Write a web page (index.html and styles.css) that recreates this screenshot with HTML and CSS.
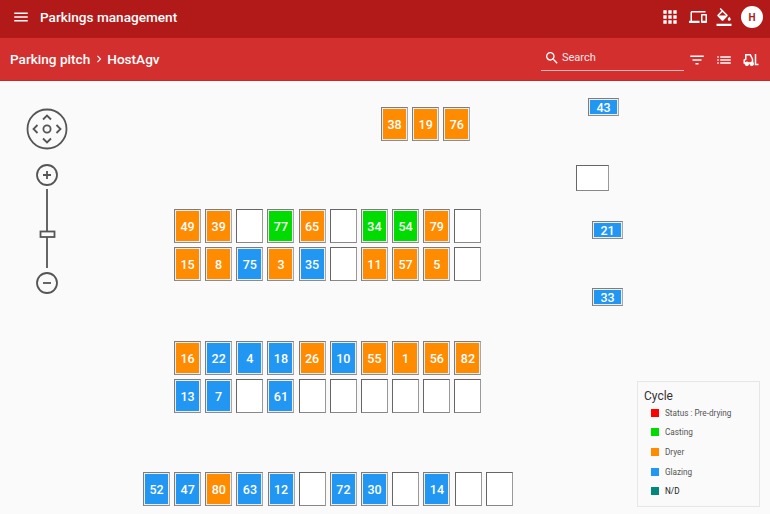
FILE: index.html
```html
<!DOCTYPE html>
<html lang="en">
<head>
<meta charset="utf-8">
<title>Parkings management</title>
<link rel="stylesheet" href="styles.css">
</head>
<body>
<header class="topbar">
  <svg class="menu-icon" width="18" height="18" viewBox="0 0 24 24"><path d="M3 18h18v-2H3zM3 13h18v-2H3zM3 6v2h18V6z"/></svg>
  <span class="app-title">Parkings management</span>
  <div class="top-actions">
    <svg width="24" height="24" viewBox="0 0 24 24"><path d="M4 8h4V4H4zm6 12h4v-4h-4zm-6 0h4v-4H4zm0-6h4v-4H4zm6 0h4v-4h-4zm6-10v4h4V4zm-6 4h4V4h-4zm6 6h4v-4h-4zm0 6h4v-4h-4z"/></svg>
    <svg width="24" height="24" viewBox="0 0 24 24"><path d="M4 6h18V4H4c-1.100 0-2 .9-2 2v11H0v3h14v-3H4V6zm19 2h-6c-.55 0-1 .45-1 1v10c0 .55.45 1 1 1h6c.55 0 1-.45 1-1V9c0-.55-.45-1-1-1zm-1 9h-4v-7h4v7z"/></svg>
    <svg width="24" height="24" viewBox="0 0 24 24"><path d="M16.56 8.94 7.62 0 6.21 1.41l2.38 2.38-5.150 5.150c-.59.59-.59 1.540 0 2.120l5.500 5.500c.29.29.68.44 1.060.44s.77-.15 1.060-.44l5.500-5.500c.59-.58.59-1.530 0-2.120zM5.210 10 10 5.210 14.790 10H5.210zM19 11.500s-2 2.170-2 3.500c0 1.100.9 2 2 2s2-.9 2-2c0-1.330-2-3.500-2-3.500zM2 21h20v3H2z"/></svg>
    <span class="avatar">H</span>
  </div>
</header>
<div class="subbar">
  <div class="crumbs">
    <span>Parking pitch</span>
    <svg width="14" height="14" viewBox="0 0 24 24"><path d="M8.6 16.6 13.2 12 8.6 7.4 10 6l6 6-6 6z"/></svg>
    <span>HostAgv</span>
  </div>
  <div class="search">
    <svg width="16" height="16" viewBox="0 0 24 24"><path d="M15.500 14h-.79l-.28-.27A6.470 6.470 0 0 0 16 9.500 6.500 6.500 0 1 0 9.500 16c1.610 0 3.090-.59 4.230-1.570l.27.28v.79l5 4.990L20.490 19l-4.990-5zm-6 0C7.010 14 5 11.990 5 9.500S7.010 5 9.500 5 14 7.010 14 9.500 11.990 14 9.500 14z"/></svg>
    <span>Search</span>
  </div>
  <div class="sub-actions">
    <svg width="18" height="18" viewBox="0 0 24 24"><path d="M10 18h4v-2h-4zM3 6v2h18V6zm3 7h12v-2H6z"/></svg>
    <svg width="18" height="18" viewBox="0 0 24 24"><path d="M3 13h2v-2H3zm0 4h2v-2H3zm0-8h2V7H3zm4 4h14v-2H7zm0 4h14v-2H7zM7 7v2h14V7z"/></svg>
    <svg width="18" height="18" viewBox="0 0 24 24"><path d="M3 16v-4l2-1V5h6l3 6v5z" class="hollow"/><circle cx="6.500" cy="17" r="2.500" class="wheel"/><circle cx="13" cy="17" r="2.500" class="wheel"/><path d="M18 4v14h4" class="hollow"/></svg>
  </div>
</div>
<main class="canvas">
  <div class="controls">
    <svg width="42" height="42" viewBox="0 0 42 42"><circle cx="21" cy="21" r="19.500"/><circle cx="21" cy="21" r="3.600"/><path d="M17 11.500l4-4 4 4M17 30.500l4 4 4-4M11.500 17l-4 4 4 4M30.500 17l4 4-4 4"/></svg>
    <svg width="24" height="108" viewBox="0 0 24 108" class="zoom"><circle cx="12" cy="12" r="10"/><path d="M8 12h8M12 8v8M12 26v79"/><rect x="5.500" y="68.500" width="14" height="5.500" class="thumb"/></svg>
    <svg width="24" height="24" viewBox="0 0 24 24"><circle cx="12" cy="12" r="10"/><path d="M8 12h8"/></svg>
  </div>

  <div class="spots at-top">
    <div class="spot orange">38</div><div class="spot orange">19</div><div class="spot orange">76</div>
  </div>

  <div class="spots at-a">
    <div class="spot orange">49</div><div class="spot orange">39</div><div class="spot"></div><div class="spot green">77</div><div class="spot orange">65</div><div class="spot"></div><div class="spot green">34</div><div class="spot green">54</div><div class="spot orange">79</div><div class="spot"></div>
  </div>
  <div class="spots at-b">
    <div class="spot orange">15</div><div class="spot orange">8</div><div class="spot blue">75</div><div class="spot orange">3</div><div class="spot blue">35</div><div class="spot"></div><div class="spot orange">11</div><div class="spot orange">57</div><div class="spot orange">5</div><div class="spot"></div>
  </div>
  <div class="spots at-c">
    <div class="spot orange">16</div><div class="spot blue">22</div><div class="spot blue">4</div><div class="spot blue">18</div><div class="spot orange">26</div><div class="spot blue">10</div><div class="spot orange">55</div><div class="spot orange">1</div><div class="spot orange">56</div><div class="spot orange">82</div>
  </div>
  <div class="spots at-d">
    <div class="spot blue">13</div><div class="spot blue">7</div><div class="spot"></div><div class="spot blue">61</div><div class="spot"></div><div class="spot"></div><div class="spot"></div><div class="spot"></div><div class="spot"></div><div class="spot"></div>
  </div>
  <div class="spots at-e">
    <div class="spot blue">52</div><div class="spot blue">47</div><div class="spot orange">80</div><div class="spot blue">63</div><div class="spot blue">12</div><div class="spot"></div><div class="spot blue">72</div><div class="spot blue">30</div><div class="spot"></div><div class="spot blue">14</div><div class="spot"></div><div class="spot"></div>
  </div>

  <div class="spot wide blue s43">43</div>
  <div class="spot free s-empty"></div>
  <div class="spot wide blue s21">21</div>
  <div class="spot wide blue s33">33</div>

  <aside class="legend">
    <div class="legend-title">Cycle</div>
    <div class="legend-row"><i class="sw red"></i><span>Status : Pre-drying</span></div>
    <div class="legend-row"><i class="sw lime"></i><span>Casting</span></div>
    <div class="legend-row"><i class="sw amber"></i><span>Dryer</span></div>
    <div class="legend-row"><i class="sw sky"></i><span>Glazing</span></div>
    <div class="legend-row nd"><i class="sw teal"></i><span>N/D</span></div>
  </aside>
</main>
</body>
</html>
```
FILE: styles.css
```css
* { box-sizing: border-box; }
html, body { margin: 0; height: 100%; overflow: hidden; }
body { background: #fafafa; font-family: Roboto, "Liberation Sans", sans-serif; color: #fff; }

.topbar {
  height: 38px; background: #b21a1a; display: flex; align-items: center;
  padding: 0 7px 4px 12px;
}
.topbar svg, .subbar svg { fill: #fff; flex: none; }
.app-title { margin-left: 10px; font-size: 13.6px; font-weight: 500; }
.top-actions { margin-left: auto; display: flex; align-items: center; gap: 8px; }
.top-actions svg { width: 18px; height: 18px; }
.top-actions svg:first-child { width: 20px; height: 20px; margin-right: 1px; }
.avatar {
  width: 22px; height: 22px; border-radius: 50%; background: #fff; color: #b21a1a;
  display: flex; align-items: center; justify-content: center; font-size: 10px; font-weight: 700;
}

.subbar {
  height: 43px; background: #d32f2f; display: flex; align-items: center;
  padding: 0 10px; border-bottom: 1px solid #c62828;
}
.crumbs { display: flex; align-items: center; font-size: 13.6px; font-weight: 500; gap: 1.5px; }
.search {
  margin: 5px 0 0 auto; align-self: flex-start; width: 143px; height: 28px;
  display: flex; align-items: center; gap: 2px;
  padding: 2px 0 0 3px; border-bottom: 1px solid #f0b8b8; font-size: 11px; color: #fbe9e9;
}
.sub-actions { margin-left: 4px; display: flex; align-items: center; gap: 9px; padding-top: 2px; }
.subbar .hollow { fill: none; stroke: #fff; stroke-width: 2; }
.subbar .wheel { fill: #fff; stroke: #fff; stroke-width: 1; }

.canvas { position: relative; height: 433px; }

.controls {
  position: absolute; left: 26px; top: 27px; width: 42px;
  display: flex; flex-direction: column; align-items: center;
}
.controls svg { fill: none; stroke: #555; stroke-width: 1.8; display: block; }
.controls .zoom { margin-top: 13px; }
.controls .thumb { fill: #fafafa; stroke: #555; }

.spots { position: absolute; display: flex; gap: 4.17px; }
.at-top { left: 381px; top: 26px; }
.at-a { left: 174px; top: 128px; }
.at-b { left: 174px; top: 166px; }
.at-c { left: 174px; top: 260px; }
.at-d { left: 174px; top: 298px; }
.at-e { left: 143px; top: 391px; }

.spot {
  width: 27px; height: 34px; flex: none; background: #fff;
  border: 1px solid #666; border-right-color: #999; border-bottom-color: #888;
  display: flex; align-items: center; justify-content: center;
  font-size: 12.5px; font-weight: 500; color: #fff;
}
.orange, .green, .blue { border-color: #7d7d7d #a8a8a8 #8c8c8c #7d7d7d; box-shadow: inset 0 0 0 1px #eee; }
.orange { background: #ff8c00; }
.green { background: #00dc00; }
.blue { background: #2196f3; }

.wide, .free { position: absolute; }
.wide { width: 31px; height: 18px; }
.s43 { left: 588px; top: 17px; }
.s21 { left: 592px; top: 140px; }
.s33 { left: 592px; top: 207px; }
.free { left: 576px; top: 84px; width: 33px; height: 26px; }

.legend {
  position: absolute; left: 637px; top: 300px; width: 123px; height: 126px;
  background: #fafafa; border: 1px solid #e6e6e6; padding: 7px 6px; color: #444;
}
.legend-title { font-size: 12px; line-height: 14px; color: #333; }
.legend-row {
  display: flex; align-items: center; gap: 6px; height: 19.600px;
  padding-left: 7px; font-size: 8.200px; color: #555;
}
.legend-row.nd { color: #222; }
.sw { width: 8px; height: 8px; flex: none; }
.red { background: #ff0000; }
.lime { background: #00dc00; }
.amber { background: #ff8c00; }
.sky { background: #2196f3; }
.teal { background: #00897b; }
```
